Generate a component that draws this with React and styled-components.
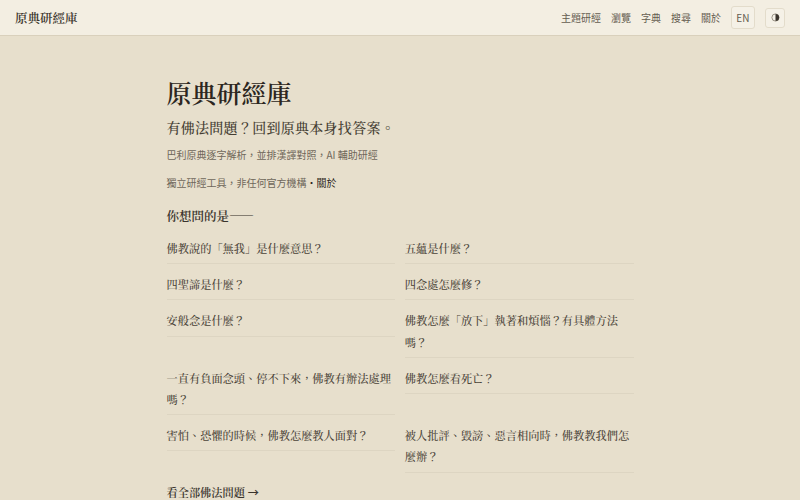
import React from "react";
import styled, { createGlobalStyle } from "styled-components";

const serif = `"Noto Serif CJK TC", "Noto Serif TC", "Noto Sans CJK TC", "Liberation Serif", serif`;
const sans = `"Noto Sans CJK TC", "Noto Sans", sans-serif`;

const Global = createGlobalStyle`
  html, body { margin: 0; padding: 0; background: #e7dfcc; height: 100%; overflow: hidden; }
  #root { height: 500px; overflow: hidden; }
`;

const Page = styled.div`
  width: 800px;
  min-height: 500px;
  color: #2c2620;
`;
const Header = styled.header`
  height: 35px;
  display: flex;
  align-items: center;
  justify-content: space-between;
  padding: 0 15px;
  background: #f3eee2;
  border-bottom: 1px solid #d9d0bc;
`;
const Brand = styled.div`
  font-family: ${serif};
  font-size: 12.5px;
  font-weight: 600;
  color: #3a342c;
`;
const Nav = styled.nav`
  display: flex;
  align-items: center;
`;
const NavLink = styled.a`
  font-family: ${sans};
  font-size: 10px;
  color: #645c50;
  margin-right: 10px;
`;
const LangButton = styled.button`
  width: 24px;
  height: 23px;
  padding: 0;
  border: 1px solid #e3dccb;
  border-radius: 3px;
  background: #f5f1e7;
  color: #645c50;
  font-family: ${sans};
  font-size: 10px;
  letter-spacing: 0.3px;
`;
const ThemeButton = styled.button`
  width: 20px;
  height: 20px;
  margin-left: 10px;
  padding: 0;
  display: flex;
  align-items: center;
  justify-content: center;
  border: 1px solid #e3dccb;
  border-radius: 3px;
  background: #f5f1e7;
`;
const Main = styled.main`
  width: 467px;
  margin: 0 auto;
  padding-top: 38px;
`;
const Title = styled.h1`
  margin: 0;
  font-family: ${serif};
  font-size: 25px;
  line-height: 36px;
  font-weight: 600;
  color: #2c2620;
`;
const Subtitle = styled.p`
  margin: 6px 0 0;
  font-family: ${serif};
  font-size: 14px;
  letter-spacing: 0.28px;
  line-height: 22px;
  font-weight: 500;
  color: #453e33;
`;
const Note = styled.p`
  margin: 0;
  margin-top: ${p => p.$top}px;
  font-family: ${sans};
  font-size: 10px;
  line-height: 16px;
  color: #6f675a;
`;
const NoteLink = styled.a`
  color: #2c2620;
`;
const Prompt = styled.h2`
  margin: 15px 0 0;
  font-family: ${serif};
  font-size: 12.5px;
  line-height: 20px;
  font-weight: 600;
  color: #3a342c;
`;
const Grid = styled.div`
  display: grid;
  grid-template-columns: 1fr 1fr;
  column-gap: 9.6px;
  margin-top: 2px;
  align-items: start;
`;
const Question = styled.a`
  display: block;
  padding: 10px 0 4px;
  font-family: ${serif};
  font-size: 11.22px;
  line-height: 21.2px;
  font-weight: 500;
  color: #4a4338;
  border-bottom: 1px solid #ddd5c2;
`;
const More = styled.a`
  display: block;
  margin-top: 11px;
  font-family: ${serif};
  font-size: 11.2px;
  font-weight: 600;
  line-height: 16px;
  color: #3a342c;
`;
const Arrow = styled.span`
  font-family: ${sans};
  font-weight: 500;
`;

const nav = ["主題研經", "瀏覽", "字典", "搜尋", "關於"];
const left = ["佛教說的「無我」是什麼意思？", "四聖諦是什麼？", "安般念是什麼？", "一直有負面念頭、停不下來，佛教有辦法處理嗎？", "害怕、恐懼的時候，佛教怎麼教人面對？"];
const right = ["五蘊是什麼？", "四念處怎麼修？", "佛教怎麼「放下」執著和煩惱？有具體方法嗎？", "佛教怎麼看死亡？", "被人批評、毀謗、惡言相向時，佛教教我們怎麼辦？"];
const pairs = left.flatMap((q, i) => [q, right[i]]);

export default function App() {
  return (
    <Page lang="zh-Hant">
      <Global />
      <Header>
        <Brand>原典研經庫</Brand>
        <Nav>
          {nav.map(n => <NavLink key={n}>{n}</NavLink>)}
          <LangButton>EN</LangButton>
          <ThemeButton>
            <svg width="9" height="9" viewBox="0 0 10 10">
              <circle cx="5" cy="5" r="4" fill="none" stroke="#7a7264" strokeWidth="0.8" />
              <path d="M5 1a4 4 0 0 1 0 8z" fill="#3a342c" />
            </svg>
          </ThemeButton>
        </Nav>
      </Header>
      <Main>
        <Title>原典研經庫</Title>
        <Subtitle>有佛法問題？回到原典本身找答案。</Subtitle>
        <Note $top={9}>巴利原典逐字解析，並排漢譯對照，AI 輔助研經</Note>
        <Note $top={12}>獨立研經工具，非任何官方機構<NoteLink>・關於</NoteLink></Note>
        <Prompt>你想問的是——</Prompt>
        <Grid>
          {pairs.map(q => <Question key={q}>{q}</Question>)}
        </Grid>
        <More>看全部佛法問題 <Arrow>→</Arrow></More>
      </Main>
    </Page>
  );
}
